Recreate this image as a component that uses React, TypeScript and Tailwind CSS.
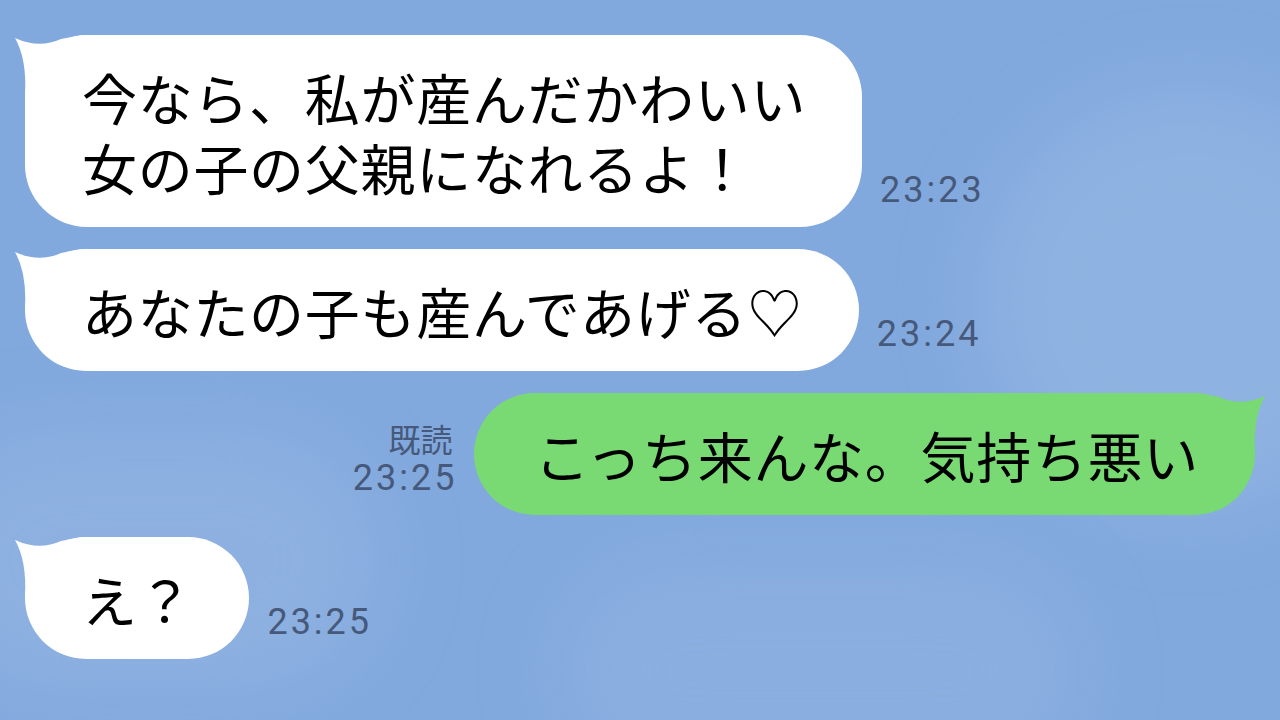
const font = "[font-family:'Noto_Sans_CJK_JP','Noto_Sans',sans-serif]";

const Tail = ({ color, flip }: { color: string; flip?: boolean }) => (
  <svg
    width="70"
    height="60"
    viewBox="0 0 70 60"
    className={`absolute top-0 ${flip ? "-right-[12px] -scale-x-100" : "-left-[12px]"}`}
  >
    <path d="M2 3 Q26 14 48 4 L70 0 L70 60 L12 60 Q14 24 2 3 Z" fill={color} />
  </svg>
);

const Time = ({ t, read }: { t: string; read?: boolean }) => (
  <div className={`flex flex-col items-end pb-[17px] text-[#47597a] ${font}`}>
    {read && <span className="mr-[2px] text-[32px] leading-[40px]">既読</span>}
    <span className="-mr-[3px] text-[36px] leading-[40px] tracking-[3px] [font-family:'Roboto',sans-serif]">{t}</span>
  </div>
);

const Left = ({ lines, t }: { lines: string[]; t: string }) => (
  <div className="flex items-end gap-[18px]">
    <div className="relative">
      <Tail color="#ffffff" />
      <div className={`relative rounded-[62px] bg-white py-[26px] pl-[57px] pr-[56px] text-[55px] leading-[70px] tracking-[0.7px] text-black ${font}`}>
        {lines.map((l) => (
          <div key={l} className="whitespace-nowrap">{l}</div>
        ))}
      </div>
    </div>
    <Time t={t} />
  </div>
);

export default function App() {
  return (
    <div className="relative h-[720px] w-[1280px] overflow-hidden bg-[#82a9de]">
      {/* soft clouds in the wallpaper */}
      <div className="pointer-events-none absolute inset-0">
        <div className="absolute left-[980px] top-[90px] h-[420px] w-[420px] rounded-full bg-[#9bbbe4] opacity-50 blur-[40px]" />
        <div className="absolute left-[-80px] top-[430px] h-[260px] w-[460px] rounded-full bg-[#98b8e2] opacity-50 blur-[40px]" />
        <div className="absolute left-[560px] top-[560px] h-[220px] w-[520px] rounded-full bg-[#93b4e0] opacity-50 blur-[40px]" />
      </div>

      <div className="relative flex flex-col gap-[22px] pl-[25px] pr-[25px] pt-[35px]">
        <Left lines={["今なら、私が産んだかわいい", "女の子の父親になれるよ！"]} t="23:23" />
        <Left lines={["あなたの子も産んであげる♡"]} t="23:24" />

        <div className="flex items-end justify-end gap-[20px]">
          <Time t="23:25" read />
          <div className="relative">
            <Tail color="#79da73" flip />
            <div className={`relative whitespace-nowrap rounded-[62px] bg-[#79da73] py-[26px] pl-[60px] pr-[56px] text-[55px] leading-[70px] tracking-[0.7px] text-black ${font}`}>
              こっち来んな。気持ち悪い
            </div>
          </div>
        </div>

        <Left lines={["え？"]} t="23:25" />
      </div>
    </div>
  );
}
